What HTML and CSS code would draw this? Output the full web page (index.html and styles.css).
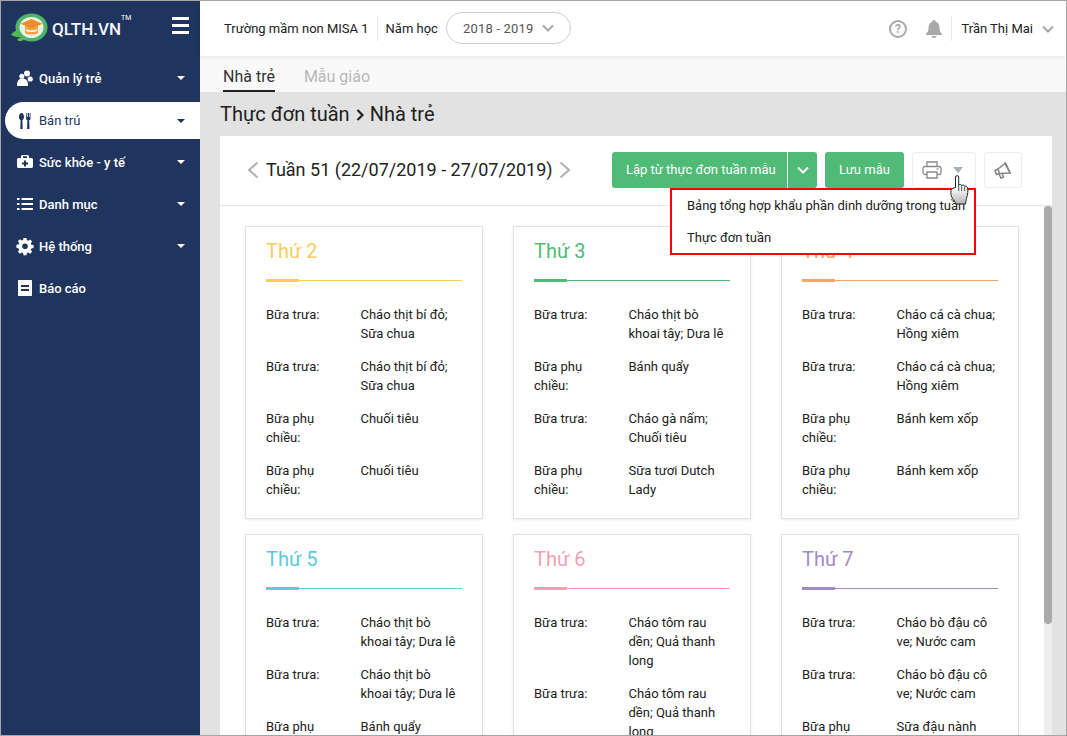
FILE: index.html
```html
<!DOCTYPE html>
<html lang="vi">
<head>
<meta charset="utf-8">
<title>QLTH.VN</title>
<link rel="stylesheet" href="styles.css">
</head>
<body>
<div class="frame">
  <aside class="sidebar">
    <div class="brand">
      <svg class="logo" viewBox="0 0 37 30" width="37" height="30">
        <path d="M0 21.500c3-3.500 7-5 11-4l1 6c-4 1.500-9 .5-12-2z" fill="#5cb947"/>
        <path d="M6 27c2-2.500 5-3 8-2-2 3.500-6 4-8 2z" fill="#5cb947"/>
        <ellipse cx="20.500" cy="14.500" rx="16" ry="14" fill="#4fb468"/>
        <ellipse cx="20.500" cy="14.500" rx="12" ry="10.500" fill="#e4f3e2"/>
        <path d="M14 13h13v7c-3 2-10 2-13 0z" fill="#f3a24b"/>
        <path d="M20.500 6l11 4.800-11 4.800-11-4.800z" fill="#f28a2e"/>
        <path d="M15 17c3 1.500 8 1.500 11 0" stroke="#fff" stroke-width="1.500" fill="none"/>
      </svg>
      <span class="brand-name">QLTH.VN</span>
      <span class="tm">TM</span>
      <div class="burger"><i></i><i></i><i></i></div>
    </div>
    <nav class="menu">
      <a class="item">
        <svg class="ico" viewBox="0 0 16 16"><circle cx="10" cy="3.500" r="3"/><circle cx="4.800" cy="6.300" r="2.500"/><circle cx="13.200" cy="9" r="2.600"/><path d="M0 15c0-4 1.800-6.500 5.500-6.500S11 11 11 15c0 .6-.4 1-1 1H1c-.6 0-1-.4-1-1z"/></svg>
        <span class="label">Quản lý trẻ</span><b class="caret"></b>
      </a>
      <a class="item active">
        <svg class="ico" viewBox="0 0 16 16"><path d="M4.500 0C2.800 0 2 2 2 4c0 1.600.8 2.800 1.600 3.200L3.300 16h2.400l-.3-8.800C6.200 6.800 7 5.600 7 4c0-2-.8-4-2.500-4z"/><path d="M9.500 0h.8v4h.7V0h1v4h.7V0h.8v5.500c0 1-.6 1.500-1.300 1.800l.3 8.700h-2.400l.3-8.700c-.7-.3-1.300-.8-1.300-1.800z"/></svg>
        <span class="label">Bán trú</span><b class="caret"></b>
      </a>
      <a class="item">
        <svg class="ico" viewBox="0 0 16 16"><path fill-rule="evenodd" d="M5 1h6l1 1v2h2.500c.8 0 1.500.7 1.500 1.500v7c0 .8-.7 1.500-1.500 1.500h-13C.7 14 0 13.300 0 12.500v-7C0 4.700.7 4 1.500 4H4V2zm1 1.300V4h4V2.300zM7 6.500V8.500H5v2h2v2h2v-2h2v-2H9v-2z"/></svg>
        <span class="label">Sức khỏe - y tế</span><b class="caret"></b>
      </a>
      <a class="item">
        <svg class="ico" viewBox="0 0 16 16"><path d="M0 2h2.500v2H0zM4.500 2H16v2H4.500zM0 7h2.500v2H0zM4.500 7H16v2H4.500zM0 12h2.500v2H0zM4.500 12H16v2H4.500z"/></svg>
        <span class="label">Danh mục</span><b class="caret"></b>
      </a>
      <a class="item">
        <svg class="ico" viewBox="0 0 16 16"><path fill-rule="evenodd" d="M6.500 0h3l.4 2.200 1.300.6L13.100 1.500l2 2-1.300 1.900.6 1.300 2.200.4v3l-2.200.4-.6 1.300 1.300 1.900-2 2-1.900-1.300-1.300.6-.4 2.200h-3l-.4-2.200-1.300-.6-1.900 1.300-2-2 1.300-1.900-.6-1.300L-.6 9.800v-3l2.200-.4.6-1.300L.9 3.200l2-2 1.900 1.300 1.300-.6zM8 5.400a2.800 2.800 0 100 5.600 2.800 2.800 0 000-5.600z"/></svg>
        <span class="label">Hệ thống</span>
        <b class="caret"></b>
      </a>
      <a class="item">
        <svg class="ico" viewBox="0 0 16 16"><path fill-rule="evenodd" d="M2 0h12c.6 0 1 .4 1 1v14c0 .6-.4 1-1 1H2c-.6 0-1-.4-1-1V1c0-.6.4-1 1-1zm2 5v2h8V5zm0 4v2h8V9z"/></svg>
        <span class="label">Báo cáo</span>
      </a>
    </nav>
  </aside>

  <main class="main">
    <header class="topbar">
      <span class="school">Trường mầm non MISA 1</span>
      <span class="year-label">Năm học</span>
      <div class="year-select">
        <span>2018 - 2019</span>
        <svg class="chev" viewBox="0 0 12 8" width="12" height="8"><path d="M1 1.500l5 5 5-5" fill="none" stroke="#a8a8a8" stroke-width="2"/></svg>
      </div>
      <div class="top-right">
        <svg class="help" viewBox="0 0 18 18" width="18" height="18"><circle cx="9" cy="9" r="8" fill="none" stroke="#a9a9a9" stroke-width="2"/><text x="9" y="13" text-anchor="middle" class="help-mark">?</text></svg>
        <svg class="bell" viewBox="0 0 18 18" width="18" height="18"><path d="M9 0c1 0 1.500.7 1.500 1.500C13.500 2.300 14.500 5 14.500 8c0 3 1 4.500 2.500 6v1H1v-1c1.500-1.500 2.500-3 2.500-6 0-3 1-5.700 4-6.500C7.500.7 8 0 9 0z" fill="#a9a9a9"/><path d="M6.500 16h5c0 1.200-1.100 2-2.500 2s-2.500-.8-2.500-2z" fill="#a9a9a9"/></svg>
        <span class="user">Trần Thị Mai</span>
        <svg class="chev" viewBox="0 0 12 8" width="12" height="8"><path d="M1 1.500l5 5 5-5" fill="none" stroke="#a8a8a8" stroke-width="2"/></svg>
      </div>
    </header>

    <div class="tabs">
      <span class="tab on">Nhà trẻ</span>
      <span class="tab">Mẫu giáo</span>
    </div>

    <h1 class="page-title">Thực đơn tuần<svg class="crumb" viewBox="0 0 8 12" width="8" height="12"><path d="M1.500 1l5 5-5 5" fill="none" stroke="#222" stroke-width="2.200"/></svg>Nhà trẻ</h1>

    <section class="panel">
      <div class="toolbar">
        <div class="week">
          <svg class="wk-arrow" viewBox="0 0 12 18" width="12" height="18"><path d="M10.500 1.500L2 9l8.500 7.500" fill="none" stroke="#b0b0b0" stroke-width="2"/></svg>
          <span class="week-text">Tuần 51 (22/07/2019 - 27/07/2019)</span>
          <svg class="wk-arrow" viewBox="0 0 12 18" width="12" height="18"><path d="M1.500 1.500L10 9l-8.500 7.500" fill="none" stroke="#b0b0b0" stroke-width="2"/></svg>
        </div>
        <div class="actions">
          <div class="btn split"><span class="btn-main">Lập từ thực đơn tuần mẫu</span><span class="btn-drop"><svg viewBox="0 0 12 8" width="12" height="8"><path d="M1 1.500l5 5 5-5" fill="none" stroke="#fff" stroke-width="2"/></svg></span></div>
          <div class="btn save">Lưu mẫu</div>
          <div class="ghost print">
            <svg viewBox="0 0 20 18" width="20" height="18" fill="none" stroke="#8a8a8a" stroke-width="1.300"><path d="M5 5.500V1h10v4.500"/><rect x="1" y="5.500" width="18" height="8" rx="2"/><path d="M5 11v6h10v-6z" fill="#fff"/><path d="M14.500 8h2"/></svg>
            <b class="print-caret"></b>
          </div>
          <div class="ghost horn">
            <svg viewBox="0 0 18 18" width="18" height="18" fill="none" stroke="#858585" stroke-width="1.500"><path d="M11 2.500L4 8l1.500 4.500L16 12z"/><path d="M11 1l5.500 11.500"/><path d="M4 8L1 9.500l1.500 4 3-1"/><path d="M5 13l2 4 2.500-1L8 12.500"/></svg>
          </div>
        </div>
        <div class="popup">
          <div class="popup-item">Bảng tổng hợp khẩu phần dinh dưỡng trong tuần</div>
          <div class="popup-item">Thực đơn tuần</div>
        </div>
        <svg class="hand" viewBox="0 0 22 30" width="22" height="30">
          <defs><linearGradient id="hg" x1="0" y1="0" x2="0" y2="1"><stop offset=".4" stop-color="#fff"/><stop offset="1" stop-color="#b5b5b5"/></linearGradient></defs>
          <path d="M5.500 2c0-1.800 3.200-1.800 3.200 0v8c1-.8 2.500-.8 3 .5 1-.6 2.500-.5 3 .7 1-.4 2.500 0 2.800 1.300.8 3 .2 7-1 11-.5 2-.8 3-.8 5.500H6c-1-2.500-2-3.500-3.500-5.500C1 21.500.5 18 1 15.500c.3-1.500 2-2.500 4.500-3z" fill="url(#hg)" stroke="#222" stroke-width="1"/>
          <path d="M8.700 10v6M11.700 10.500V16M14.700 11.500V16" stroke="#222" stroke-width=".8" fill="none"/>
        </svg>
      </div>

      <div class="scroller">
        <div class="grid">
          <article class="card d2">
            <h2 class="day">Thứ 2</h2><div class="rule"></div>
            <div class="meal"><span>Bữa trưa:</span><span>Cháo thịt bí đỏ; Sữa chua</span></div>
            <div class="meal"><span>Bữa trưa:</span><span>Cháo thịt bí đỏ; Sữa chua</span></div>
            <div class="meal"><span>Bữa phụ chiều:</span><span>Chuối tiêu</span></div>
            <div class="meal"><span>Bữa phụ chiều:</span><span>Chuối tiêu</span></div>
          </article>
          <article class="card d3">
            <h2 class="day">Thứ 3</h2><div class="rule"></div>
            <div class="meal"><span>Bữa trưa:</span><span>Cháo thịt bò khoai tây; Dưa lê</span></div>
            <div class="meal"><span>Bữa phụ chiều:</span><span>Bánh quẩy</span></div>
            <div class="meal"><span>Bữa trưa:</span><span>Cháo gà nấm; Chuối tiêu</span></div>
            <div class="meal"><span>Bữa phụ chiều:</span><span>Sữa tươi Dutch Lady</span></div>
          </article>
          <article class="card d4">
            <h2 class="day">Thứ 4</h2><div class="rule"></div>
            <div class="meal"><span>Bữa trưa:</span><span>Cháo cá cà chua; Hồng xiêm</span></div>
            <div class="meal"><span>Bữa trưa:</span><span>Cháo cá cà chua; Hồng xiêm</span></div>
            <div class="meal"><span>Bữa phụ chiều:</span><span>Bánh kem xốp</span></div>
            <div class="meal"><span>Bữa phụ chiều:</span><span>Bánh kem xốp</span></div>
          </article>
          <article class="card d5">
            <h2 class="day">Thứ 5</h2><div class="rule"></div>
            <div class="meal"><span>Bữa trưa:</span><span>Cháo thịt bò khoai tây; Dưa lê</span></div>
            <div class="meal"><span>Bữa trưa:</span><span>Cháo thịt bò khoai tây; Dưa lê</span></div>
            <div class="meal"><span>Bữa phụ chiều:</span><span>Bánh quẩy</span></div>
          </article>
          <article class="card d6">
            <h2 class="day">Thứ 6</h2><div class="rule"></div>
            <div class="meal"><span>Bữa trưa:</span><span>Cháo tôm rau dền; Quả thanh long</span></div>
            <div class="meal"><span>Bữa trưa:</span><span>Cháo tôm rau dền; Quả thanh long</span></div>
          </article>
          <article class="card d7">
            <h2 class="day">Thứ 7</h2><div class="rule"></div>
            <div class="meal"><span>Bữa trưa:</span><span>Cháo bò đậu cô ve; Nước cam</span></div>
            <div class="meal"><span>Bữa trưa:</span><span>Cháo bò đậu cô ve; Nước cam</span></div>
            <div class="meal"><span>Bữa phụ chiều:</span><span>Sữa đậu nành</span></div>
          </article>
        </div>
        <div class="track"><div class="thumb"></div></div>
      </div>
    </section>
  </main>
</div>
</body>
</html>
```

FILE: styles.css
```css
* { box-sizing: border-box; }
html, body { margin: 0; height: 100%; overflow: hidden; }
body { font-family: Roboto, "Liberation Sans", sans-serif; font-size: 13px; color: #212121; }

.frame {
  width: 1067px; height: 736px;
  border: 1px solid #a6a6a6;
  display: flex;
  overflow: hidden;
  background: #e2e2e2;
}

/* Sidebar */
.sidebar { width: 199px; flex: none; background: #1f355e; color: #fff; }
.brand { height: 56px; display: flex; align-items: center; padding-left: 10px; position: relative; }
.logo { flex: none; margin-top: -2px; }
.brand-name { font-size: 17px; font-weight: 500; margin-left: 4px; margin-top: -1px; color: #f3f5f7; }
.tm { position: absolute; left: 120px; top: 13px; font-size: 7px; }
.burger { position: absolute; left: 171px; top: 16px; width: 17px; display: flex; flex-direction: column; gap: 4px; }
.burger i { display: block; height: 3px; background: #fff; }
.menu { padding-left: 4px; }
.item { height: 42px; display: flex; align-items: center; padding-left: 12px; font-weight: 500; position: relative; }
.item.active { background: #fff; color: #1f355e; height: 37px; margin: 3px 0 2px; border-radius: 19px 0 0 19px; font-weight: 400; }
.ico { width: 16px; height: 16px; fill: #fff; flex: none; overflow: visible; }
.active .ico { fill: #1f355e; }
.label { margin-left: 6px; flex: 1; }
.caret { width: 0; height: 0; border: 4px solid transparent; border-top: 4px solid #fff; border-bottom: 0; margin-right: 15px; }
.active .caret { border-top-color: #1f355e; }

/* Main */
.main { flex: 1; display: flex; flex-direction: column; min-width: 0; }
.topbar {
  height: 55px; flex: none; background: #fff;
  display: flex; align-items: center; padding-left: 24px; padding-right: 12px;
  box-shadow: 0 2px 4px rgba(0,0,0,.06); position: relative;
}
.school { padding-right: 8px; height: 25px; line-height: 25px; border-right: 1px solid #e4e4e4; }
.year-label { margin-left: 8px; }
.year-select {
  margin-left: 8px; width: 125px; height: 32px; margin-top: -1px;
  border: 1px solid #cfcfcf; border-radius: 16px;
  display: flex; align-items: center; justify-content: space-between;
  padding: 0 16px; color: #555; letter-spacing: .2px;
}
.top-right { margin-left: auto; display: flex; align-items: center; }
.help-mark { font: 700 12px Roboto, sans-serif; fill: #a9a9a9; }
.bell { margin-left: 18px; }
.user { margin-left: 8px; padding-left: 9px; height: 25px; line-height: 25px; border-left: 1px solid #e8e8e8; }
.top-right .chev { margin-left: 9px; }

.tabs { height: 36px; flex: none; background: #f9f9f9; display: flex; padding-left: 23px; gap: 29px; }
.tab { font-size: 16px; padding-top: 4px; line-height: 34px; height: 36px; color: #b8b8b8; }
.tab.on { color: #333; border-bottom: 2px solid #222; }

.page-title { margin: 0; height: 44px; flex: none; padding-left: 20px; font-size: 20px; font-weight: 400; line-height: 44px; color: #212121; display: flex; align-items: center; }
.crumb { margin: 2px 6px 0 6px; }

.panel { margin-left: 20px; margin-right: 14px; flex: 1; min-height: 0; background: #fff; display: flex; flex-direction: column; }
.toolbar { height: 70px; flex: none; border-bottom: 1px solid #e6e6e6; display: flex; align-items: center; justify-content: space-between; padding: 0 30px 2px 27px; position: relative; }
.week { display: flex; align-items: center; }
.week-text { font-size: 18px; margin: 0 6px 0 7px; color: #222; white-space: nowrap; }
.actions { display: flex; gap: 8px; height: 36px; }
.btn { background: #4fbb76; color: #fff; border-radius: 3px; display: flex; align-items: center; }
.split { width: 205px; }
.btn-main { width: 176px; padding-left: 14px; height: 100%; line-height: 36px; border-right: 1px solid #fff; white-space: nowrap; }
.btn-drop { flex: 1; display: flex; align-items: center; justify-content: center; }
.save { width: 79px; justify-content: center; }
.ghost { border: 1px solid #ececec; border-radius: 3px; display: flex; align-items: center; }
.print { width: 64px; padding-left: 9px; }
.print-caret { margin-left: 11px; margin-top: 1px; width: 0; height: 0; border: 5px solid transparent; border-top: 6px solid #a9b0b8; border-bottom: 0; }
.horn { width: 38px; justify-content: center; }

.popup { position: absolute; left: 450px; top: 52px; width: 306px; height: 67px; background: #fff; border: 2px solid #f00; z-index: 3; }
.popup-item { height: 32px; line-height: 32px; padding-left: 15px; white-space: nowrap; }
.hand { position: absolute; left: 730px; top: 39px; z-index: 4; }

.scroller { flex: 1; min-height: 0; display: flex; }
.grid { flex: 1; min-width: 0; overflow: hidden; padding: 20px 25px 0; display: grid; grid-template-columns: repeat(3, 238px); column-gap: 30px; row-gap: 15px; align-content: start; }
.track { width: 8px; flex: none; background: #eee; }
.thumb { height: 418px; background: #aaa; border-radius: 4px; }

.card { border: 1px solid #e0e0e0; box-shadow: 0 1px 3px rgba(0,0,0,.08); background: #fff; padding: 0 20px 5px; }
.day { margin: 0; font-size: 20px; font-weight: 400; line-height: 24px; padding-top: 12px; height: 40px; }
.rule { height: 1px; margin: 13px 0 24px; background: currentColor; position: relative; }
.rule::before { content: ""; position: absolute; left: 0; top: -1px; width: 33px; height: 3px; background: currentColor; }
.meal { display: grid; grid-template-columns: 75px 1fr; column-gap: 19.5px; line-height: 19px; color: #212121; margin-bottom: 14px; }
.d2 { color: #f9cd5a; }
.d3 { color: #4fbb76; }
.d4 { color: #f5a368; }
.d5 { color: #5ccbdc; }
.d6 { color: #f39fb1; }
.d7 { color: #a18bc6; }
```
